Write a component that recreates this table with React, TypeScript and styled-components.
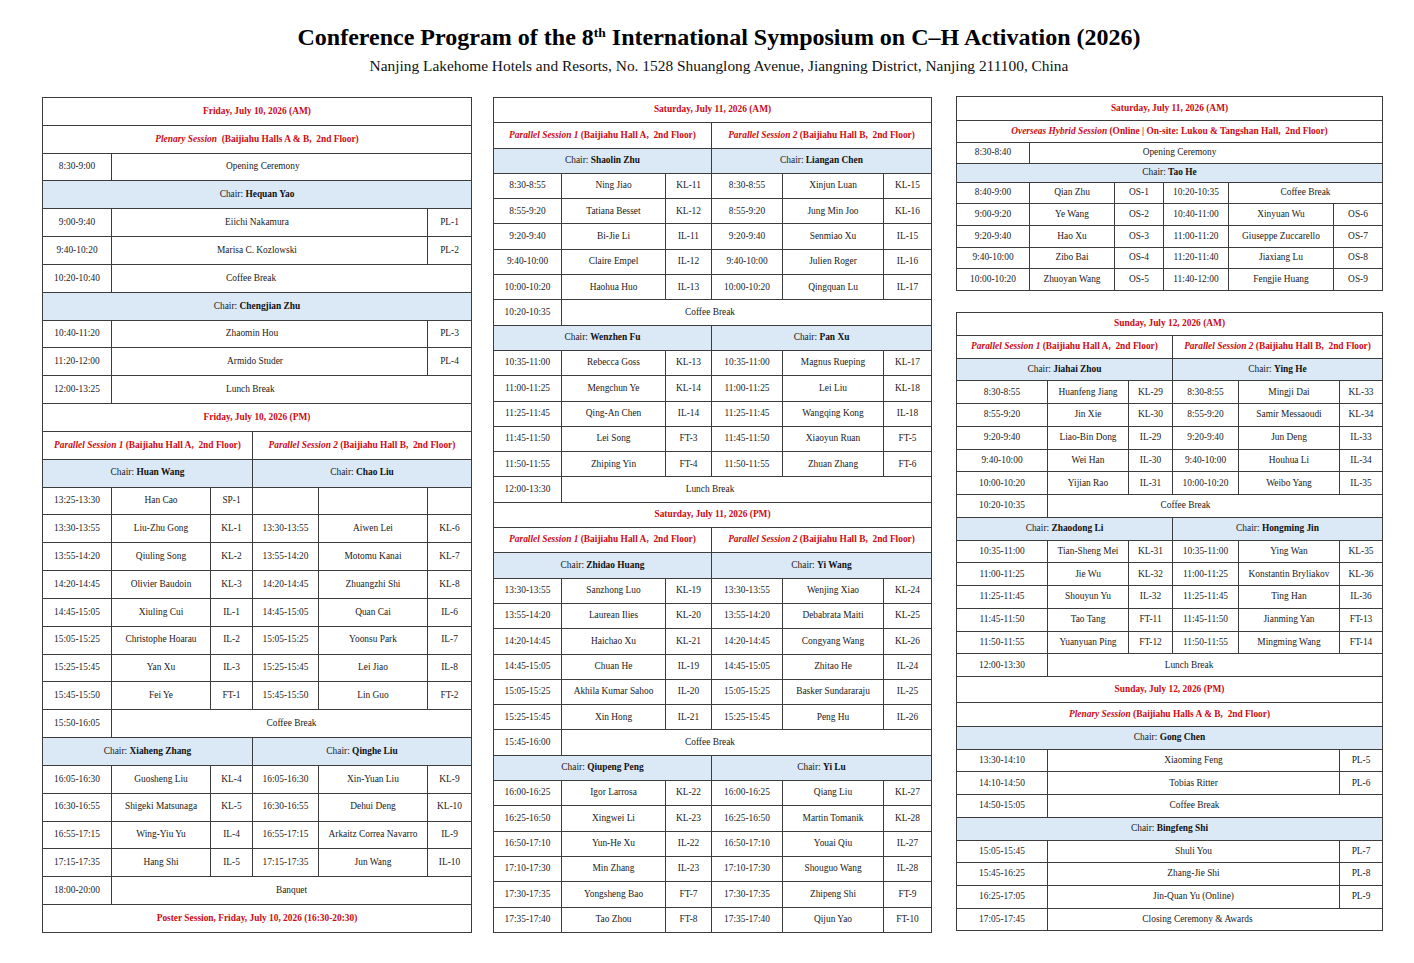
import React from "react";
import styled, { createGlobalStyle } from "styled-components";

const Global = createGlobalStyle`
  html, body { margin: 0; padding: 0; background: #ffffff; }
  body { font-family: "Liberation Serif", "Times New Roman", serif; color: #1a1a1a; }
`;

const RED = "#cc0a14";
const LINE = "#3c3c3c";
const CHAIR_BG = "#dbe8f6";

const Page = styled.div`
  width: 1414px;
  height: 963px;
  padding-top: 24px;
  box-sizing: border-box;
`;

const Header = styled.header`
  display: flex;
  flex-direction: column;
  align-items: center;
  padding-left: 24px;
`;

const Title = styled.h1`
  margin: 0;
  font-family: "Liberation Serif", "Times New Roman", serif;
  font-weight: bold;
  font-size: 24px;
  line-height: 26px;
  color: #000;
  white-space: nowrap;
`;

const Sup = styled.sup`
  font-size: 13.5px;
  line-height: 0;
  vertical-align: 8px;
`;

const Subtitle = styled.p`
  margin: 7px 0 0;
  font-size: 15.4px;
  line-height: 18px;
  color: #111;
  white-space: nowrap;
`;

const Columns = styled.main`
  display: flex;
  align-items: flex-start;
  margin-top: 22px;
  padding-left: 42px;
`;

const Column = styled.section<{ $gap: number; $w: number; $top?: number }>`
  display: flex;
  flex-direction: column;
  gap: 21px;
  width: ${(p) => p.$w}px;
  margin-right: ${(p) => p.$gap}px;
  margin-top: ${(p) => p.$top ?? 0}px;
`;

const Table = styled.table<{ $w: number }>`
  width: ${(p) => p.$w}px;
  border-collapse: collapse;
  table-layout: fixed;
  font-family: "Liberation Serif", "Times New Roman", serif;
  font-size: 9.4px;
  color: #1a1a1a;
  border: 1.2px solid ${LINE};
`;

const Col = styled.col<{ $w: number }>`
  width: ${(p) => p.$w}px;
`;

const Row = styled.tr<{ $h: number }>`
  height: ${(p) => p.$h}px;
`;

const Cell = styled.td<{ $padL?: number; $padR?: number; $left?: boolean }>`
  border: 1px solid ${LINE};
  padding: 0 ${(p) => p.$padR ?? 1}px 0 ${(p) => p.$padL ?? 1}px;
  text-align: ${(p) => (p.$left ? "left" : "center")};
  vertical-align: middle;
  white-space: nowrap;
  overflow: hidden;
  line-height: 1;
`;

const HeadCell = styled(Cell)`
  color: ${RED};
  font-weight: bold;
`;

const Em = styled.i`
  font-style: italic;
`;

const ChairCell = styled(Cell)`
  background: ${CHAIR_BG};
`;

const Bold = styled.b`
  font-weight: bold;
  color: #111;
`;

type Talk = [string, string, string];

const Chair = ({ name, span }: { name: string; span: number }) => (
  <ChairCell colSpan={span}>
    Chair: <Bold>{name}</Bold>
  </ChairCell>
);

const Session = ({ n, hall }: { n: number; hall: string }) => (
  <HeadCell colSpan={3}>
    <Em>Parallel Session {n}</Em> (Baijiahu Hall {hall},{"\u00a0\u00a0"}2nd Floor)
  </HeadCell>
);

const TalkPair = ({ h, a, b }: { h: number; a: Talk; b?: Talk }) => (
  <Row $h={h}>
    <Cell>{a[0]}</Cell>
    <Cell>{a[1]}</Cell>
    <Cell>{a[2]}</Cell>
    <Cell>{b ? b[0] : ""}</Cell>
    <Cell>{b ? b[1] : ""}</Cell>
    <Cell>{b ? b[2] : ""}</Cell>
  </Row>
);

const pairs = (h: number, list: [Talk, Talk?][]) =>
  list.map(([a, b], i) => <TalkPair key={i} h={h} a={a} b={b} />);

/* ---------------- Left: Friday ---------------- */
const LH = 27.83;
const LeftTable = () => (
  <Table $w={429}>
    <colgroup>
      {[69, 99, 42, 66, 109, 44].map((w, i) => (
        <Col key={i} $w={w} />
      ))}
    </colgroup>
    <tbody>
      <Row $h={LH}>
        <HeadCell colSpan={6}>Friday, July 10, 2026 (AM)</HeadCell>
      </Row>
      <Row $h={LH}>
        <HeadCell colSpan={6}>
          <Em>Plenary Session</Em>
          {"\u00a0\u00a0"}(Baijiahu Halls A &amp; B,{"\u00a0\u00a0"}2nd Floor)
        </HeadCell>
      </Row>
      <Row $h={LH}>
        <Cell>8:30-9:00</Cell>
        <Cell colSpan={5} $left $padL={114}>Opening Ceremony</Cell>
      </Row>
      <Row $h={LH}>
        <Chair span={6} name="Hequan Yao" />
      </Row>
      <Row $h={LH}>
        <Cell>9:00-9:40</Cell>
        <Cell colSpan={4} $padR={26}>Eiichi Nakamura</Cell>
        <Cell>PL-1</Cell>
      </Row>
      <Row $h={LH}>
        <Cell>9:40-10:20</Cell>
        <Cell colSpan={4} $padR={26}>Marisa C. Kozlowski</Cell>
        <Cell>PL-2</Cell>
      </Row>
      <Row $h={LH}>
        <Cell>10:20-10:40</Cell>
        <Cell colSpan={5} $left $padL={114}>Coffee Break</Cell>
      </Row>
      <Row $h={LH}>
        <Chair span={6} name="Chengjian Zhu" />
      </Row>
      <Row $h={LH}>
        <Cell>10:40-11:20</Cell>
        <Cell colSpan={4} $padR={36}>Zhaomin Hou</Cell>
        <Cell>PL-3</Cell>
      </Row>
      <Row $h={LH}>
        <Cell>11:20-12:00</Cell>
        <Cell colSpan={4} $padR={30}>Armido Studer</Cell>
        <Cell>PL-4</Cell>
      </Row>
      <Row $h={LH}>
        <Cell>12:00-13:25</Cell>
        <Cell colSpan={5} $left $padL={114}>Lunch Break</Cell>
      </Row>
      <Row $h={LH}>
        <HeadCell colSpan={6}>Friday, July 10, 2026 (PM)</HeadCell>
      </Row>
      <Row $h={LH}>
        <Session n={1} hall="A" />
        <Session n={2} hall="B" />
      </Row>
      <Row $h={LH}>
        <Chair span={3} name="Huan Wang" />
        <Chair span={3} name="Chao Liu" />
      </Row>
      {pairs(LH, [
        [["13:25-13:30", "Han Cao", "SP-1"]],
        [["13:30-13:55", "Liu-Zhu Gong", "KL-1"], ["13:30-13:55", "Aiwen Lei", "KL-6"]],
        [["13:55-14:20", "Qiuling Song", "KL-2"], ["13:55-14:20", "Motomu Kanai", "KL-7"]],
        [["14:20-14:45", "Olivier Baudoin", "KL-3"], ["14:20-14:45", "Zhuangzhi Shi", "KL-8"]],
        [["14:45-15:05", "Xiuling Cui", "IL-1"], ["14:45-15:05", "Quan Cai", "IL-6"]],
        [["15:05-15:25", "Christophe Hoarau", "IL-2"], ["15:05-15:25", "Yoonsu Park", "IL-7"]],
        [["15:25-15:45", "Yan Xu", "IL-3"], ["15:25-15:45", "Lei Jiao", "IL-8"]],
        [["15:45-15:50", "Fei Ye", "FT-1"], ["15:45-15:50", "Lin Guo", "FT-2"]],
      ])}
      <Row $h={LH}>
        <Cell>15:50-16:05</Cell>
        <Cell colSpan={5}>Coffee Break</Cell>
      </Row>
      <Row $h={LH}>
        <Chair span={3} name="Xiaheng Zhang" />
        <Chair span={3} name="Qinghe Liu" />
      </Row>
      {pairs(LH, [
        [["16:05-16:30", "Guosheng Liu", "KL-4"], ["16:05-16:30", "Xin-Yuan Liu", "KL-9"]],
        [["16:30-16:55", "Shigeki Matsunaga", "KL-5"], ["16:30-16:55", "Dehui Deng", "KL-10"]],
        [["16:55-17:15", "Wing-Yiu Yu", "IL-4"], ["16:55-17:15", "Arkaitz Correa Navarro", "IL-9"]],
        [["17:15-17:35", "Hang Shi", "IL-5"], ["17:15-17:35", "Jun Wang", "IL-10"]],
      ])}
      <Row $h={LH}>
        <Cell>18:00-20:00</Cell>
        <Cell colSpan={5}>Banquet</Cell>
      </Row>
      <Row $h={LH}>
        <HeadCell colSpan={6}>Poster Session, Friday, July 10, 2026 (16:30-20:30)</HeadCell>
      </Row>
    </tbody>
  </Table>
);

/* ---------------- Middle: Saturday ---------------- */
const MH = 25.3;
const MiddleTable = () => (
  <Table $w={438}>
    <colgroup>
      {[68, 104, 46, 71, 101, 48].map((w, i) => (
        <Col key={i} $w={w} />
      ))}
    </colgroup>
    <tbody>
      <Row $h={MH}>
        <HeadCell colSpan={6}>Saturday, July 11, 2026 (AM)</HeadCell>
      </Row>
      <Row $h={MH}>
        <Session n={1} hall="A" />
        <Session n={2} hall="B" />
      </Row>
      <Row $h={MH}>
        <Chair span={3} name="Shaolin Zhu" />
        <Chair span={3} name="Liangan Chen" />
      </Row>
      {pairs(MH, [
        [["8:30-8:55", "Ning Jiao", "KL-11"], ["8:30-8:55", "Xinjun Luan", "KL-15"]],
        [["8:55-9:20", "Tatiana Besset", "KL-12"], ["8:55-9:20", "Jung Min Joo", "KL-16"]],
        [["9:20-9:40", "Bi-Jie Li", "IL-11"], ["9:20-9:40", "Senmiao Xu", "IL-15"]],
        [["9:40-10:00", "Claire Empel", "IL-12"], ["9:40-10:00", "Julien Roger", "IL-16"]],
        [["10:00-10:20", "Haohua Huo", "IL-13"], ["10:00-10:20", "Qingquan Lu", "IL-17"]],
      ])}
      <Row $h={MH}>
        <Cell>10:20-10:35</Cell>
        <Cell colSpan={5} $padR={74}>Coffee Break</Cell>
      </Row>
      <Row $h={MH}>
        <Chair span={3} name="Wenzhen Fu" />
        <Chair span={3} name="Pan Xu" />
      </Row>
      {pairs(MH, [
        [["10:35-11:00", "Rebecca Goss", "KL-13"], ["10:35-11:00", "Magnus Rueping", "KL-17"]],
        [["11:00-11:25", "Mengchun Ye", "KL-14"], ["11:00-11:25", "Lei Liu", "KL-18"]],
        [["11:25-11:45", "Qing-An Chen", "IL-14"], ["11:25-11:45", "Wangqing Kong", "IL-18"]],
        [["11:45-11:50", "Lei Song", "FT-3"], ["11:45-11:50", "Xiaoyun Ruan", "FT-5"]],
        [["11:50-11:55", "Zhiping Yin", "FT-4"], ["11:50-11:55", "Zhuan Zhang", "FT-6"]],
      ])}
      <Row $h={MH}>
        <Cell>12:00-13:30</Cell>
        <Cell colSpan={5} $padR={74}>Lunch Break</Cell>
      </Row>
      <Row $h={MH}>
        <HeadCell colSpan={6}>Saturday, July 11, 2026 (PM)</HeadCell>
      </Row>
      <Row $h={MH}>
        <Session n={1} hall="A" />
        <Session n={2} hall="B" />
      </Row>
      <Row $h={MH}>
        <Chair span={3} name="Zhidao Huang" />
        <Chair span={3} name="Yi Wang" />
      </Row>
      {pairs(MH, [
        [["13:30-13:55", "Sanzhong Luo", "KL-19"], ["13:30-13:55", "Wenjing Xiao", "KL-24"]],
        [["13:55-14:20", "Laurean Ilies", "KL-20"], ["13:55-14:20", "Debabrata Maiti", "KL-25"]],
        [["14:20-14:45", "Haichao Xu", "KL-21"], ["14:20-14:45", "Congyang Wang", "KL-26"]],
        [["14:45-15:05", "Chuan He", "IL-19"], ["14:45-15:05", "Zhitao He", "IL-24"]],
        [["15:05-15:25", "Akhila Kumar Sahoo", "IL-20"], ["15:05-15:25", "Basker Sundararaju", "IL-25"]],
        [["15:25-15:45", "Xin Hong", "IL-21"], ["15:25-15:45", "Peng Hu", "IL-26"]],
      ])}
      <Row $h={MH}>
        <Cell>15:45-16:00</Cell>
        <Cell colSpan={5} $padR={74}>Coffee Break</Cell>
      </Row>
      <Row $h={MH}>
        <Chair span={3} name="Qiupeng Peng" />
        <Chair span={3} name="Yi Lu" />
      </Row>
      {pairs(MH, [
        [["16:00-16:25", "Igor Larrosa", "KL-22"], ["16:00-16:25", "Qiang Liu", "KL-27"]],
        [["16:25-16:50", "Xingwei Li", "KL-23"], ["16:25-16:50", "Martin Tomanik", "KL-28"]],
        [["16:50-17:10", "Yun-He Xu", "IL-22"], ["16:50-17:10", "Youai Qiu", "IL-27"]],
        [["17:10-17:30", "Min Zhang", "IL-23"], ["17:10-17:30", "Shouguo Wang", "IL-28"]],
        [["17:30-17:35", "Yongsheng Bao", "FT-7"], ["17:30-17:35", "Zhipeng Shi", "FT-9"]],
        [["17:35-17:40", "Tao Zhou", "FT-8"], ["17:35-17:40", "Qijun Yao", "FT-10"]],
      ])}
    </tbody>
  </Table>
);

/* ---------------- Right top: Overseas ---------------- */
const RH = 21.7;
const OverseasTable = () => (
  <Table $w={426}>
    <colgroup>
      {[73, 85, 49, 65, 105, 49].map((w, i) => (
        <Col key={i} $w={w} />
      ))}
    </colgroup>
    <tbody>
      <Row $h={24}>
        <HeadCell colSpan={6}>Saturday, July 11, 2026 (AM)</HeadCell>
      </Row>
      <Row $h={RH}>
        <HeadCell colSpan={6}>
          <Em>Overseas Hybrid Session</Em> (Online | On-site: Lukou &amp; Tangshan Hall,
          {"\u00a0\u00a0"}2nd Floor)
        </HeadCell>
      </Row>
      <Row $h={RH}>
        <Cell>8:30-8:40</Cell>
        <Cell colSpan={5} $padR={54}>Opening Ceremony</Cell>
      </Row>
      <Row $h={18.3}>
        <Chair span={6} name="Tao He" />
      </Row>
      <Row $h={RH}>
        <Cell>8:40-9:00</Cell>
        <Cell>Qian Zhu</Cell>
        <Cell>OS-1</Cell>
        <Cell>10:20-10:35</Cell>
        <Cell colSpan={2}>Coffee Break</Cell>
      </Row>
      {pairs(RH, [
        [["9:00-9:20", "Ye Wang", "OS-2"], ["10:40-11:00", "Xinyuan Wu", "OS-6"]],
        [["9:20-9:40", "Hao Xu", "OS-3"], ["11:00-11:20", "Giuseppe Zuccarello", "OS-7"]],
        [["9:40-10:00", "Zibo Bai", "OS-4"], ["11:20-11:40", "Jiaxiang Lu", "OS-8"]],
        [["10:00-10:20", "Zhuoyan Wang", "OS-5"], ["11:40-12:00", "Fengjie Huang", "OS-9"]],
      ])}
    </tbody>
  </Table>
);

/* ---------------- Right bottom: Sunday ---------------- */
const SH = 22.75;
const SundayTable = () => (
  <Table $w={426}>
    <colgroup>
      {[91, 81, 44, 66, 101, 43].map((w, i) => (
        <Col key={i} $w={w} />
      ))}
    </colgroup>
    <tbody>
      <Row $h={SH}>
        <HeadCell colSpan={6}>Sunday, July 12, 2026 (AM)</HeadCell>
      </Row>
      <Row $h={SH}>
        <Session n={1} hall="A" />
        <Session n={2} hall="B" />
      </Row>
      <Row $h={SH}>
        <Chair span={3} name="Jiahai Zhou" />
        <Chair span={3} name="Ying He" />
      </Row>
      {pairs(SH, [
        [["8:30-8:55", "Huanfeng Jiang", "KL-29"], ["8:30-8:55", "Mingji Dai", "KL-33"]],
        [["8:55-9:20", "Jin Xie", "KL-30"], ["8:55-9:20", "Samir Messaoudi", "KL-34"]],
        [["9:20-9:40", "Liao-Bin Dong", "IL-29"], ["9:20-9:40", "Jun Deng", "IL-33"]],
        [["9:40-10:00", "Wei Han", "IL-30"], ["9:40-10:00", "Houhua Li", "IL-34"]],
        [["10:00-10:20", "Yijian Rao", "IL-31"], ["10:00-10:20", "Weibo Yang", "IL-35"]],
      ])}
      <Row $h={SH}>
        <Cell>10:20-10:35</Cell>
        <Cell colSpan={5} $padR={60}>Coffee Break</Cell>
      </Row>
      <Row $h={SH}>
        <Chair span={3} name="Zhaodong Li" />
        <Chair span={3} name="Hongming Jin" />
      </Row>
      {pairs(SH, [
        [["10:35-11:00", "Tian-Sheng Mei", "KL-31"], ["10:35-11:00", "Ying Wan", "KL-35"]],
        [["11:00-11:25", "Jie Wu", "KL-32"], ["11:00-11:25", "Konstantin Bryliakov", "KL-36"]],
        [["11:25-11:45", "Shouyun Yu", "IL-32"], ["11:25-11:45", "Ting Han", "IL-36"]],
        [["11:45-11:50", "Tao Tang", "FT-11"], ["11:45-11:50", "Jianming Yan", "FT-13"]],
        [["11:50-11:55", "Yuanyuan Ping", "FT-12"], ["11:50-11:55", "Mingming Wang", "FT-14"]],
      ])}
      <Row $h={SH}>
        <Cell>12:00-13:30</Cell>
        <Cell colSpan={5} $padR={53}>Lunch Break</Cell>
      </Row>
      <Row $h={26}>
        <HeadCell colSpan={6}>Sunday, July 12, 2026 (PM)</HeadCell>
      </Row>
      <Row $h={24}>
        <HeadCell colSpan={6}>
          <Em>Plenary Session</Em> (Baijiahu Halls A &amp; B,{"\u00a0\u00a0"}2nd Floor)
        </HeadCell>
      </Row>
      <Row $h={22.7}>
        <Chair span={6} name="Gong Chen" />
      </Row>
      <Row $h={22.7}>
        <Cell>13:30-14:10</Cell>
        <Cell colSpan={4}>Xiaoming Feng</Cell>
        <Cell>PL-5</Cell>
      </Row>
      <Row $h={22.7}>
        <Cell>14:10-14:50</Cell>
        <Cell colSpan={4}>Tobias Ritter</Cell>
        <Cell>PL-6</Cell>
      </Row>
      <Row $h={22.7}>
        <Cell>14:50-15:05</Cell>
        <Cell colSpan={5} $padR={42}>Coffee Break</Cell>
      </Row>
      <Row $h={22.7}>
        <Chair span={6} name="Bingfeng Shi" />
      </Row>
      <Row $h={22.7}>
        <Cell>15:05-15:45</Cell>
        <Cell colSpan={4}>Shuli You</Cell>
        <Cell>PL-7</Cell>
      </Row>
      <Row $h={22.7}>
        <Cell>15:45-16:25</Cell>
        <Cell colSpan={4}>Zhang-Jie Shi</Cell>
        <Cell>PL-8</Cell>
      </Row>
      <Row $h={22.7}>
        <Cell>16:25-17:05</Cell>
        <Cell colSpan={4}>Jin-Quan Yu (Online)</Cell>
        <Cell>PL-9</Cell>
      </Row>
      <Row $h={22.7}>
        <Cell>17:05-17:45</Cell>
        <Cell colSpan={5} $padR={36}>Closing Ceremony &amp; Awards</Cell>
      </Row>
    </tbody>
  </Table>
);

export default function App() {
  return (
    <>
      <Global />
      <Page>
        <Header>
          <Title>
            Conference Program of the 8<Sup>th</Sup> International Symposium on C–H Activation (2026)
          </Title>
          <Subtitle>
            Nanjing Lakehome Hotels and Resorts, No. 1528 Shuanglong Avenue, Jiangning District, Nanjing 211100, China
          </Subtitle>
        </Header>
        <Columns>
          <Column $w={429} $gap={22}>
            <LeftTable />
          </Column>
          <Column $w={438} $gap={25}>
            <MiddleTable />
          </Column>
          <Column $w={426} $gap={0} $top={-1}>
            <OverseasTable />
            <SundayTable />
          </Column>
        </Columns>
      </Page>
    </>
  );
}
